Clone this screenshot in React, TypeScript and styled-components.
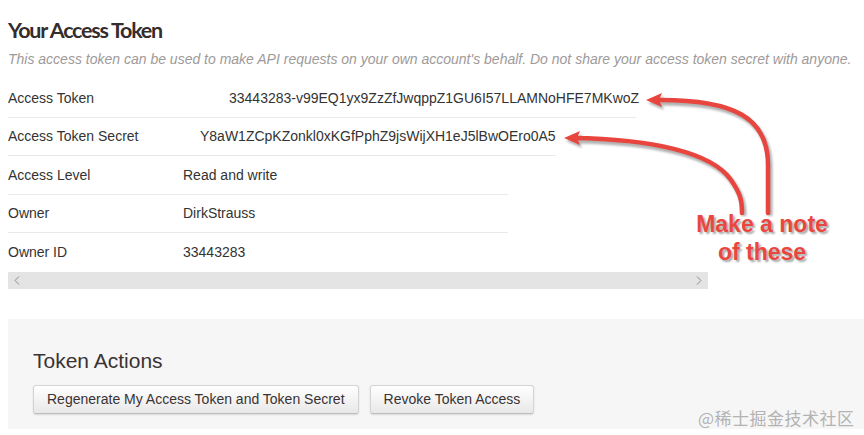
import React from "react";
import styled, { createGlobalStyle } from "styled-components";

const Global = createGlobalStyle`
  html, body { margin: 0; padding: 0; background: #fff; }
  body { font-family: "Liberation Sans", Arial, sans-serif; color: #333; }
`;

const Page = styled.div`
  position: relative;
  width: 864px;
  height: 435px;
  overflow: hidden;
  padding-left: 8px;
  box-sizing: border-box;
`;

const Title = styled.h1`
  margin: 0;
  padding-top: 16px;
  font-family: "Lato", "Liberation Sans", sans-serif;
  font-weight: 700;
  font-size: 21.5px;
  line-height: 28px;
  letter-spacing: -1.25px;
  color: #352c2c;
`;

const Subtitle = styled.p`
  margin: 5px 0 0;
  font-style: italic;
  font-size: 14px;
  line-height: 20px;
  color: #9e9a99;
  white-space: nowrap;
`;

const Table = styled.div`
  margin-top: 10px;
  display: flex;
  flex-direction: column;
`;

const Row = styled.div<{ $width: number }>`
  display: flex;
  align-items: center;
  width: ${(p) => p.$width}px;
  height: 38.5px;
  box-sizing: border-box;
  border-bottom: 1px solid #e9e9e9;
  font-size: 14px;
  color: #333;
  white-space: nowrap;
  &:last-child { border-bottom: none; }
`;

const Label = styled.div`
  width: 175px;
  flex-shrink: 0;
`;

const Value = styled.div<{ $offset: number }>`
  padding-left: ${(p) => p.$offset}px;
`;

const Scrollbar = styled.div`
  width: 700px;
  height: 17px;
  background: #e4e4e4;
  display: flex;
  align-items: center;
  justify-content: space-between;
  padding: 0 6px;
  box-sizing: border-box;
`;

const Panel = styled.div`
  margin-top: 30px;
  background: #f6f6f6;
  height: 110px;
  padding: 29px 25px 0;
  box-sizing: border-box;
`;

const PanelTitle = styled.h2`
  margin: 0;
  font-weight: 400;
  font-size: 21px;
  line-height: 26px;
  color: #3a3333;
`;

const Buttons = styled.div`
  margin-top: 11px;
  display: flex;
  gap: 11px;
`;

const Button = styled.button`
  height: 29px;
  padding: 0 13px;
  font-family: "Liberation Sans", Arial, sans-serif;
  font-size: 14px;
  color: #3a3333;
  background: linear-gradient(#ffffff, #e8e8e8);
  border: 1px solid #d4d4d4;
  border-bottom-color: #bdbdbd;
  border-radius: 3px;
  box-shadow: 0 1px 2px rgba(0, 0, 0, 0.12);
`;

const Watermark = styled.div`
  position: absolute;
  left: 698px;
  top: 407px;
  font-family: "Noto Sans CJK SC", sans-serif;
  font-size: 17px;
  line-height: 22px;
  color: #b3b3b3;
  letter-spacing: 0.5px;
`;

const Overlay = styled.svg`
  position: absolute;
  left: 0;
  top: 0;
  pointer-events: none;
`;

const Note = styled.div`
  position: absolute;
  left: 680px;
  top: 210px;
  width: 164px;
  text-align: center;
  font-family: "Liberation Sans", Arial, sans-serif;
  font-weight: 700;
  font-size: 23px;
  line-height: 28px;
  color: #ea4640;
  text-shadow: 2px 2px 2px rgba(0, 0, 0, 0.35);
`;

const Chevron = ({ dir }: { dir: "left" | "right" }) => (
  <svg width="6" height="9" viewBox="0 0 6 9">
    <path
      d={dir === "left" ? "M5 0.5 L1 4.5 L5 8.5" : "M1 0.5 L5 4.5 L1 8.5"}
      fill="none"
      stroke="#8a8a8a"
      strokeWidth="1"
    />
  </svg>
);

const rows = [
  { label: "Access Token", value: "33443283-v99EQ1yx9ZzZfJwqppZ1GU6I57LLAMNoHFE7MKwoZ", width: 628, offset: 46 },
  { label: "Access Token Secret", value: "Y8aW1ZCpKZonkl0xKGfPphZ9jsWijXH1eJ5lBwOEro0A5", width: 548, offset: 17 },
  { label: "Access Level", value: "Read and write", width: 500, offset: 0 },
  { label: "Owner", value: "DirkStrauss", width: 500, offset: 0 },
  { label: "Owner ID", value: "33443283", width: 500, offset: 0 },
];

const Arrows = () => (
  <Overlay width="864" height="435" viewBox="0 0 864 435">
    <defs>
      <filter id="sh" x="-20%" y="-20%" width="140%" height="140%">
        <feGaussianBlur stdDeviation="1.2" />
      </filter>
    </defs>
    <g transform="translate(2,3)" opacity="0.45" filter="url(#sh)">
      <path d="M655 100 C 735 99, 768 118, 768 165 L 768 213" fill="none" stroke="#555" strokeWidth="5" />
      <polygon points="646,100 662,93 659,100 662,107" fill="#555" />
      <path d="M573 138 C 650 139, 712 152, 731 180 C 740 193, 742 200, 742 213" fill="none" stroke="#555" strokeWidth="5" />
      <polygon points="564,138 580,131 577,138 580,145" fill="#555" />
    </g>
    <path d="M655 100 C 735 99, 768 118, 768 165 L 768 213" fill="none" stroke="#e8453e" strokeWidth="4.5" strokeLinecap="round" />
    <polygon points="646,100 662,93 659,100 662,107" fill="#e8453e" />
    <path d="M573 138 C 650 139, 712 152, 731 180 C 740 193, 742 200, 742 213" fill="none" stroke="#e8453e" strokeWidth="4.5" strokeLinecap="round" />
    <polygon points="564,138 580,131 577,138 580,145" fill="#e8453e" />
  </Overlay>
);

export default function App() {
  return (
    <>
      <Global />
      <Page>
        <Title>Your Access Token</Title>
        <Subtitle>
          This access token can be used to make API requests on your own account's behalf. Do not share your access token secret with anyone.
        </Subtitle>
        <Table>
          {rows.map((r) => (
            <Row key={r.label} $width={r.width}>
              <Label>{r.label}</Label>
              <Value $offset={r.offset}>{r.value}</Value>
            </Row>
          ))}
        </Table>
        <Scrollbar>
          <Chevron dir="left" />
          <Chevron dir="right" />
        </Scrollbar>
        <Panel>
          <PanelTitle>Token Actions</PanelTitle>
          <Buttons>
            <Button>Regenerate My Access Token and Token Secret</Button>
            <Button>Revoke Token Access</Button>
          </Buttons>
        </Panel>
        <Arrows />
        <Note>
          Make a note
          <br />
          of these
        </Note>
        <Watermark>@稀士掘金技术社区</Watermark>
      </Page>
    </>
  );
}
